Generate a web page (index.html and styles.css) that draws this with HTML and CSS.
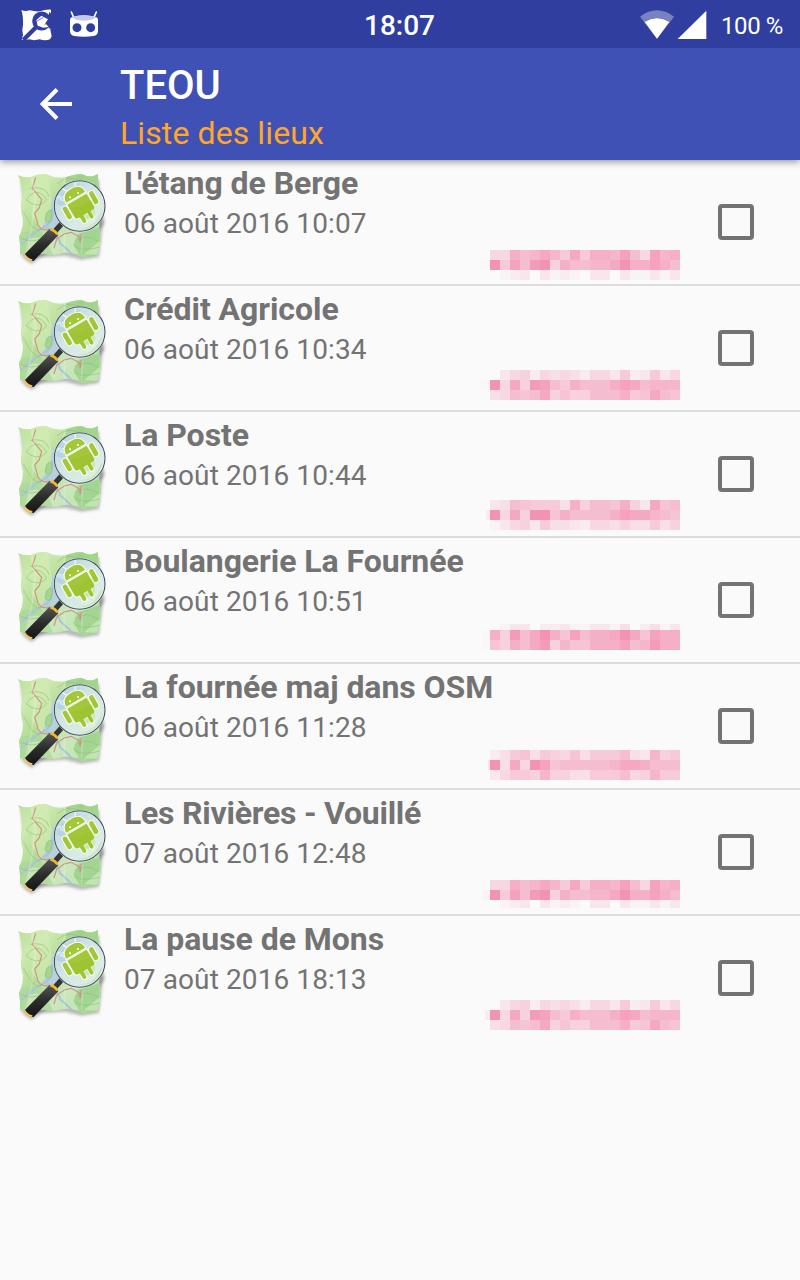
FILE: index.html
```
<!DOCTYPE html>
<html lang="fr">
<head>
<meta charset="utf-8">
<title>TEOU</title>
<link rel="stylesheet" href="styles.css">
</head>
<body>
<svg class="defs" width="0" height="0" aria-hidden="true">
  <defs>
    <linearGradient id="land" x1="0" y1="0" x2="1" y2="1">
      <stop offset="0" stop-color="#b5df90"/><stop offset=".22" stop-color="#cdeab0"/><stop offset=".42" stop-color="#b3dc96"/><stop offset=".65" stop-color="#cfe8c0"/><stop offset="1" stop-color="#8fcc7c"/>
    </linearGradient>
    <linearGradient id="glass" x1="0" y1="0" x2="1" y2="1">
      <stop offset="0" stop-color="#b2cfdc"/><stop offset=".45" stop-color="#d3e6e6"/><stop offset="1" stop-color="#e4f2e4"/>
    </linearGradient>
    <linearGradient id="grip" x1="0" y1="0" x2="0" y2="1">
      <stop offset="0" stop-color="#555"/><stop offset=".5" stop-color="#2c2c2c"/><stop offset="1" stop-color="#151515"/>
    </linearGradient>
    <filter id="soft" x="-20%" y="-20%" width="140%" height="140%"><feGaussianBlur stdDeviation="5"/></filter>
    <clipPath id="mapclip"><path d="M24 30Q44 40 65 35Q88 24 110 28Q138 42 166 37Q198 26 216 26Q240 42 264 27Q262 62 275 85Q279 130 272 160Q263 188 273 213Q272 244 262 269Q238 279 214 275Q186 261 162 264Q132 275 106 266Q68 264 30 268Q32 244 27 216Q39 190 39 164Q28 132 36 100Q39 62 24 30Z"/></clipPath>
    <symbol id="place" viewBox="0 0 330 330">
      <path d="M32 44L266 42L278 180L267 276L214 284L165 272L106 276L34 275L46 165Z" fill="#777" opacity=".5" filter="url(#soft)"/>
      <path d="M40 280L155 180Q235 230 280 150L284 175Q260 220 190 204L65 297Z" fill="#555" opacity=".4" filter="url(#soft)"/>
      <g clip-path="url(#mapclip)">
        <path d="M15 15H290V290H15Z" fill="url(#land)"/>
        <path d="M65 20L110 20L126 105L118 170L91 192L64 150Z" fill="#d3ecb4" opacity=".6"/>
        <path d="M166 30L216 20L226 70L170 75Z" fill="#a0d38c" opacity=".8"/>
        <path d="M195 35L270 20L278 90L235 50Z" fill="#98d083" opacity=".7"/>
        <path d="M25 205L90 193L130 270L26 272Z" fill="#abd999" opacity=".8"/>
        <path d="M58 222Q80 212 104 224L94 270H50Z" fill="#c8e4b9"/>
        <path d="M135 218L270 185V270L162 264Z" fill="#c8e7b8" opacity=".8"/>
        <path d="M204 207L269 186V228L213 275L190 240Z" fill="#8fcd7e" opacity=".65"/>
        <path d="M129 90L148 122L150 185L115 192L96 184L116 158Z" fill="#b6d1da"/>
        <path d="M34 238Q65 205 111 181Q132 162 126 130M112 188Q150 218 150 235Q173 253 191 273" fill="none" stroke="#a9c2df" stroke-width="6"/>
        <path d="M110 144Q119 130 127 140L123 168Q112 177 105 165Z" fill="#a6d592" stroke="#89bd83" stroke-width="2"/>
        <path d="M48 105Q80 58 110 105Q85 135 48 105M60 70Q106 61 118 95M40 140Q70 205 94 194M33 220Q66 235 92 221M195 227Q230 203 266 230M195 245Q220 260 270 246M141 56Q177 25 223 53" fill="none" stroke="#91bd7a" stroke-width="1.8"/>
        <path d="M77 37L67 70L95 103L88 128L74 144L84 180L94 192L119 196M132 249L140 222L163 207L184 202L209 216L210 232M211 231L214 207" fill="none" stroke="#cf9288" stroke-width="3.5"/>
        <path d="M64 36L76 100L65 190L47 266M166 37L155 90M164 206L162 264M218 210L214 275" fill="none" stroke="#fff" opacity=".2" stroke-width="5"/>
      </g>
      <path d="M155 176L133 201" stroke="#343434" stroke-width="16"/>
      <path d="M119 191L145 211L71 288Q57 287 44 268Z" fill="url(#grip)"/>
      <path d="M124 190Q137 193 145 206L139 210Q132 199 119 196Z" fill="#f6b82b"/>
      <path d="M45 266Q52 280 68 283L64 288Q48 284 43 271Z" fill="#ffc83e"/>
      <circle cx="209" cy="123" r="76" fill="url(#glass)" stroke="#f5ffff" stroke-width="4"/>
      <path d="M140 115Q155 70 210 56Q176 95 179 125Q153 128 140 115Z" fill="#9fc5e0" opacity=".4"/>
      <path d="M190 183Q220 201 255 172L278 132Q276 167 243 186Q220 200 190 183Z" fill="#b1dfa2" opacity=".55"/>
      <path d="M144 103V94H151V107M156 94H162V107H156Z" fill="none" stroke="#f4ffff" stroke-width="2"/>
      <g transform="translate(211 121) rotate(-30) scale(1.08 1.02)" fill="#a4c639" stroke="#f9fff0" stroke-width="3">
        <path d="M-13 -54L-19 -67M13 -54L20 -67" fill="none" stroke-linecap="round"/>
        <path d="M-32 -26Q-32 -57 0 -57Q32 -57 32 -26Z"/>
        <path d="M-32 -22H33V22Q33 31 24 31H18V46Q18 53 12 53Q5 53 5 46V31H-5V46Q-5 53 -12 53Q-19 53 -19 46V31H-24Q-32 31 -32 22Z"/>
        <rect x="-50" y="-22" width="16" height="44" rx="8"/><rect x="35" y="-22" width="16" height="44" rx="8"/>
      </g>
      <path d="M175 130Q230 122 257 96L254 152L232 163L196 157Z" fill="#87b719" opacity=".18"/>
      <circle cx="180" cy="97" r="3" fill="#fff"/><circle cx="204" cy="84" r="3" fill="#fff"/>
      <circle cx="209" cy="123" r="76" fill="none" stroke="#3e4c58" stroke-width="3.2"/>
    </symbol>
  </defs>
</svg>
<div class="screen">
  <header class="statusbar">
    <svg class="notifications" viewBox="0 0 360 144">
      <path d="M64 27Q75 33 89 28Q105 32 120 31Q137 25 153 26Q151 41 156 52Q152 71 151 86L155 106L150 115Q136 121 119 115Q103 120 87 115Q76 119 65 116L69 102Q65 86 69 72Q70 44 64 27Z" fill="#fff"/>
      <path d="M108 79L70 117" stroke="#303f9f" stroke-width="13"/>
      <path d="M147 32L162 46L160 84L146 82Z" fill="#303f9f"/>
      <circle cx="125" cy="60" r="25" fill="#303f9f" stroke="#303f9f" stroke-width="7"/>
      <path d="M109 57L124 44L144 55L136 67L146 78L130 80L113 74Z" fill="#fff"/>
      <path d="M110 61L130 49M134 71L144 64" stroke="#303f9f" stroke-width="2"/>
      <path d="M214 33L221 49M289 33L282 49" stroke="#fff" stroke-width="5" stroke-linecap="round"/>
      <path d="M216 49Q251 36 288 49Q294 49 294 58V91Q293 104 281 105Q251 110 223 105Q211 104 210 91V57Q210 49 216 49Z" fill="#fff"/>
      <path d="M217 49Q251 36 287 49Q278 59 251 59Q225 59 217 49Z" fill="#c5cae9"/>
      <circle cx="231" cy="80" r="13.5" fill="#303f9f"/><circle cx="272" cy="80" r="13.5" fill="#303f9f"/>
    </svg>
    <span class="clock">18:07</span>
    <div class="system">
      <svg class="signals" viewBox="0 0 204 90">
        <path d="M0 20Q51-18 102 20L51 86Z" fill="#7882c0"/>
        <path d="M14 36Q51 14 88 36L51 86Z" fill="#fff"/>
        <path d="M199 2V87H113Z" fill="#fff"/>
      </svg>
      <span class="battery">100 %</span>
    </div>
  </header>
  <div class="appbar">
    <svg class="back" viewBox="0 0 32 32"><path d="M17 1.5L2.5 16L17 30.5M2.5 16H32" fill="none" stroke="#fff" stroke-width="4"/></svg>
    <div class="titles"><h1 class="title">TEOU</h1><p class="subtitle">Liste des lieux</p></div>
  </div>
  <main class="places" id="places"></main>
</div>
<script src="app.js"></script>
</body>
</html>
```
FILE: styles.css
```
* { box-sizing: border-box; }
body { margin: 0; font-family: Roboto, "Noto Sans", sans-serif; background: #fafafa; }
.defs { position: absolute; }
.screen { width: 800px; height: 1280px; overflow: hidden; background: #fafafa; }
.statusbar { height: 48px; background: #303f9f; color: #fff; display: grid; grid-template-columns: 1fr auto 1fr; align-items: center; position: relative; z-index: 2; }
.notifications { width: 120px; height: 48px; display: block; }
.clock { font-size: 28px; line-height: 48px; font-weight: 500; padding: 2px 1px 0 0; }
.system { display: flex; justify-content: flex-end; align-items: center; padding-right: 17px; gap: 13px; }
.signals { width: 68px; height: 30px; margin-top: -1px; }
.battery { font-size: 24px; line-height: 48px; padding-top: 1px; letter-spacing: -.4px; white-space: nowrap; }
.appbar { height: 112px; background: #3f51b5; display: flex; align-items: center; padding-left: 40px; gap: 48px; position: relative; z-index: 1; box-shadow: 0 2px 7px rgba(0,0,0,.4); }
.back { width: 32px; height: 32px; }
.titles { padding-top: 8px; }
.title { margin: 0; color: #fff; font-size: 40px; line-height: 48px; font-weight: 500; }
.subtitle { margin: 2px 0 0; color: #ffa726; font-size: 32px; line-height: 42px; letter-spacing: .1px; }
.place { height: 126px; display: grid; grid-template-columns: 124px 556px 120px; border-bottom: 2px solid #dcdcdc; color: #737373; }
.place:last-child { border-bottom: 0; }
.thumb { width: 110px; height: 110px; margin: 5px 0 0 10px; }
.details { display: grid; grid-template-rows: 44px 40px; }
.name { margin: 0; font-size: 32px; line-height: 46px; font-weight: 700; letter-spacing: -.05px; white-space: nowrap; }
.kern { letter-spacing: -4px; }
.condensed { letter-spacing: -.24px; }
.date { font-size: 28px; line-height: 39px; letter-spacing: .1px; white-space: nowrap; }
.details, .mosaic { grid-row: 1; }
.details { grid-column: 2; }
.mosaic { grid-column: 2; justify-self: end; align-self: start; width: 200px; display: block; }
.check { width: 36px; height: 36px; border: 4px solid #737373; border-radius: 4px; margin: 44px 0 0 38px; grid-column: 3; grid-row: 1; }
```
FILE: app.js
```
// Each digit is the tint strength of one ten-pixel cell.
const strips = {
  a: ["55b9aca7c7bbad95dab", "f7d9ef6b99aacfbbdb9", "0123031210330311313"],
  b: ["0356254542553723735", "f5c6ed97b999bdc9aaa", "45989c6866999b78c98"],
  c: ["34987774b6998b63c89", "f5c6ff8b9999bdcca98", "1356374432554644746"],
  d: ["0133022311331402413", "b6e9cfb8d9bbcfc8dbb", "86b9ce6a88bbbd9aebb"],
  e: ["2478476584777943a67", "f4c5fd899999accb999", "35776a6644777956a77"]
};
const places = [
  ['<span class="kern">L</span>\'étang de Berge', "06 août 2016 10:07", "a", 90, [10,10,10], [10,.5]],
  ["Crédit Agricole", "06 août 2016 10:34", "b", 84, [10,10,10], [10,.5]],
  ["La Poste", "06 août 2016 10:44", "c", 88, [10,10,10], [4,2]],
  ["Boulangerie La Fournée", "06 août 2016 10:51", "d", 86, [6,10,10], [7,.5]],
  ["La fournée maj dans OSM", "06 août 2016 11:28", "e", 86, [10,10,10], [2,3]],
  ['<span class="condensed">Les Rivières - Vouillé</span>', "07 août 2016 12:48", "a", 90, [10,10,8], [7,1]],
  ["La pause de Mons", "07 août 2016 18:13", "b", 84, [10,10,10], [5,2]]
];
function mosaic(key, top, heights, lead) {
  let y = 0, cells = "";
  const rect = (x, w, h, level) => {
    cells += `<rect x="${x}" y="${y}" width="${w}" height="${h}" fill="#f290b2" fill-opacity="${level / 15.5}"/>`;
  };
  strips[key].forEach((row, r) => {
    if (r === 1 || (key === "d" && r === 2)) rect(10 - lead[0], lead[0], heights[r], lead[1]);
    [...row].forEach((digit, i) => rect(10 + i * 10, 10, heights[r], parseInt(digit, 16)));
    y += heights[r];
  });
  return `<svg class="mosaic" style="margin-top:${top}px;height:${y}px" viewBox="0 0 200 ${y}" shape-rendering="crispEdges">${cells}</svg>`;
}
document.getElementById("places").innerHTML = places.map(([name, date, key, top, heights, lead]) => `
  <article class="place">
    <svg class="thumb"><use href="#place"/></svg>
    <div class="details"><h2 class="name">${name}</h2><span class="date">${date}</span></div>
    ${mosaic(key, top, heights, lead)}
    <span class="check" role="checkbox" aria-checked="false"></span>
  </article>`).join("");
```
